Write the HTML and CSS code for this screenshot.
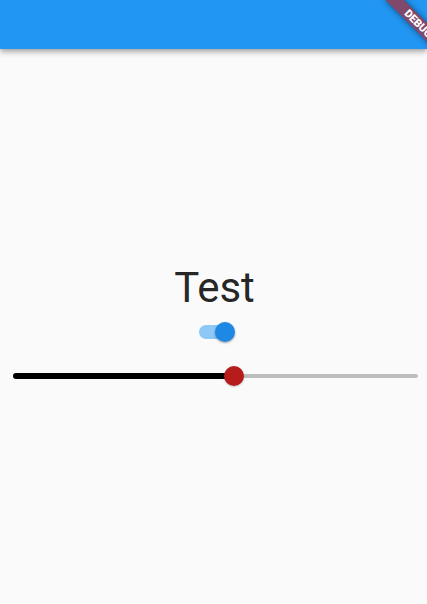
FILE: index.html
```html
<!DOCTYPE html>
<html lang="en">
<head>
<meta charset="utf-8">
<title>Test</title>
<link rel="stylesheet" href="styles.css">
</head>
<body>
<div class="app">
  <header class="appbar"></header>
  <main class="content">
    <div class="title">Test</div>
    <div class="switch-box">
      <div class="switch-track">
        <div class="switch-thumb"></div>
      </div>
    </div>
    <div class="slider">
      <div class="slider-track">
        <div class="slider-active" style="width: 54.57%"></div>
        <div class="slider-inactive"></div>
        <div class="slider-thumb" style="left: 54.57%"></div>
      </div>
    </div>
  </main>
  <div class="debug-banner">DEBUG</div>
</div>
</body>
</html>
```
FILE: styles.css
```css
html, body {
  margin: 0;
  padding: 0;
  width: 427px;
  height: 604px;
  overflow: hidden;
  background: #fafafa;
  font-family: Roboto, "Noto Sans", sans-serif;
}

.app {
  position: relative;
  width: 427px;
  height: 604px;
  display: flex;
  flex-direction: column;
  overflow: hidden;
}

.appbar {
  height: 49px;
  flex: 0 0 49px;
  background: #2196f3;
  position: relative;
  z-index: 1;
  box-shadow: 0 2px 4px -1px rgba(0,0,0,0.2), 0 4px 5px 0 rgba(0,0,0,0.14), 0 1px 10px 0 rgba(0,0,0,0.12);
}

.content {
  flex: 1;
  display: flex;
  flex-direction: column;
  justify-content: center;
  align-items: stretch;
  padding-top: 11px;
}

.title {
  font-size: 42px;
  line-height: 48px;
  height: 48px;
  text-align: center;
  color: rgba(0,0,0,0.87);
  font-weight: 400;
  padding-left: 2px;
}

.switch-box {
  height: 40px;
  display: flex;
  align-items: center;
  justify-content: center;
}

.switch-track {
  position: relative;
  width: 33px;
  height: 14px;
  border-radius: 7px;
  background: #8dc8f6;
  margin-left: 4px;
}

.switch-thumb {
  position: absolute;
  right: -3px;
  top: -3px;
  width: 20px;
  height: 20px;
  border-radius: 50%;
  background: #1e88e5;
  box-shadow: 0 1px 2px rgba(0,0,0,0.25), 0 1px 3px rgba(0,0,0,0.12);
}

.slider {
  height: 48px;
  display: flex;
  align-items: center;
  padding: 0 9px 0 13px;
}

.slider-track {
  position: relative;
  flex: 1;
  height: 6px;
  display: flex;
  align-items: center;
}

.slider-active {
  height: 6px;
  background: #000;
  border-radius: 3px 0 0 3px;
}

.slider-inactive {
  flex: 1;
  height: 4px;
  background: #bdbdbd;
  border-radius: 0 2px 2px 0;
}

.slider-thumb {
  position: absolute;
  top: 50%;
  width: 20px;
  height: 20px;
  margin-left: -10px;
  margin-top: -10px;
  border-radius: 50%;
  background: #b71c1c;
  box-shadow: 0 1px 2px rgba(0,0,0,0.2);
}

.debug-banner {
  position: absolute;
  left: 402px;
  top: 27px;
  width: 80px;
  height: 13px;
  transform-origin: 40px -27px;
  transform: rotate(45deg);
  background: rgba(183,28,28,0.63);
  box-shadow: 0 0 6px rgba(0,0,0,0.5);
  color: #fff;
  font-size: 10.8px;
  font-weight: 900;
  line-height: 13px;
  text-align: center;
  z-index: 2;
}
```
